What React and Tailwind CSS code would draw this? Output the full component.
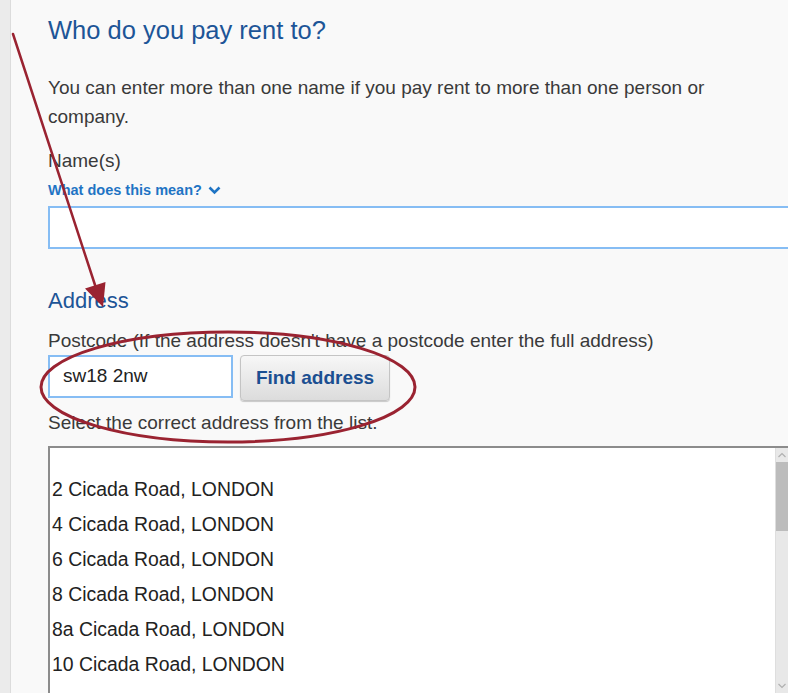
import React from 'react';

const addresses = [
  '',
  '2 Cicada Road, LONDON',
  '4 Cicada Road, LONDON',
  '6 Cicada Road, LONDON',
  '8 Cicada Road, LONDON',
  '8a Cicada Road, LONDON',
  '10 Cicada Road, LONDON',
];

function Annotations() {
  return (
    <svg className="absolute inset-0 pointer-events-none" width="788" height="693" viewBox="0 0 788 693">
      <line x1="13" y1="34" x2="95" y2="285" stroke="#9a2331" strokeWidth="2.5" strokeLinecap="round" />
      <polygon points="103,307 105.5,282 85,288.5" fill="#9a2331" />
      <ellipse cx="228" cy="387" rx="187" ry="55" fill="none" stroke="#9a2331" strokeWidth="3" />
    </svg>
  );
}

export default function App() {
  return (
    <div className="relative w-[788px] h-[693px] overflow-hidden flex bg-[#f9f9f9] font-['Liberation_Sans',Arial,sans-serif]">
      {/* left gutter */}
      <div className="w-[11px] shrink-0 bg-[#ebebeb] border-r border-[#dcdcdc]" />

      <div className="flex-1 flex flex-col pl-[37px]">
        <h1 className="mt-[15px] text-[25.5px] leading-[30px] text-[#1d5597]">Who do you pay rent to?</h1>

        <p className="mt-[28px] w-[700px] text-[19px] leading-[29px] text-[#3a3a3a]">
          You can enter more than one name if you pay rent to more than one person or company.
        </p>

        <label className="mt-[15px] text-[19px] leading-[29px] text-[#3a3a3a]">Name(s)</label>

        <button className="mt-[6px] flex items-center gap-[6px] text-[14.5px] leading-[18px] font-bold text-[#1f74c4]">
          What does this mean?
          <svg width="13" height="9" viewBox="0 0 13 9">
            <path d="M1.5 1.5 L6.5 6.5 L11.5 1.5" fill="none" stroke="#1f74c4" strokeWidth="2.6" />
          </svg>
        </button>

        <div className="mt-[7px] w-[800px] h-[43px] shrink-0 bg-white border-2 border-[#86bdf4]" />

        <h2 className="mt-[39px] text-[22px] leading-[26px] text-[#1d5597]">Address</h2>

        <div className="mt-[15px] text-[19px] leading-[24px] text-[#3a3a3a]">
          Postcode (If the address doesn't have a postcode enter the full address)
        </div>

        <div className="mt-[2px] flex items-start gap-[7px]">
          <div className="w-[185px] h-[43px] bg-white border-2 border-[#86bdf4] flex items-center pl-[13px] text-[19px] text-[#222]">
            sw18 2nw
          </div>
          <button className="w-[150px] h-[46px] rounded-[4px] border border-[#c4c4c4] bg-gradient-to-b from-[#f7f7f7] to-[#dcdcdc] shadow-[0_1px_1px_rgba(0,0,0,0.2)] text-[19px] font-bold text-[#1b4f91]">
            Find address
          </button>
        </div>

        <div className="mt-[10px] text-[19px] leading-[24px] text-[#3a3a3a]">Select the correct address from the list.</div>

        <div className="mt-[11px] w-[742px] h-[250px] shrink-0 bg-white border-2 border-[#8c8c8c] flex overflow-hidden">
          <div className="flex-1 flex flex-col pl-[2px]">
            {addresses.map((a, i) => (
              <div
                key={i}
                className={`${i === 0 ? 'h-[24px]' : 'h-[35px]'} shrink-0 flex items-center text-[19.4px] text-[#222] whitespace-nowrap`}
              >
                {a}
              </div>
            ))}
          </div>
          <div className="w-[13px] shrink-0 bg-[#e8e8e8] border-l border-[#dedede] flex flex-col items-center">
            <svg width="10" height="14" viewBox="0 0 10 14" className="shrink-0">
              <path d="M1.5 9 L5 5.5 L8.5 9" fill="none" stroke="#b0b0b0" strokeWidth="1.2" />
            </svg>
            <div className="w-[13px] h-[69px] shrink-0 bg-[#bcbcbc]" />
            <svg width="10" height="14" viewBox="0 0 10 14" className="shrink-0 mt-auto mb-[1px]">
              <path d="M1.5 5 L5 8.5 L8.5 5" fill="none" stroke="#b0b0b0" strokeWidth="1.2" />
            </svg>
          </div>
        </div>
      </div>

      <Annotations />
    </div>
  );
}
